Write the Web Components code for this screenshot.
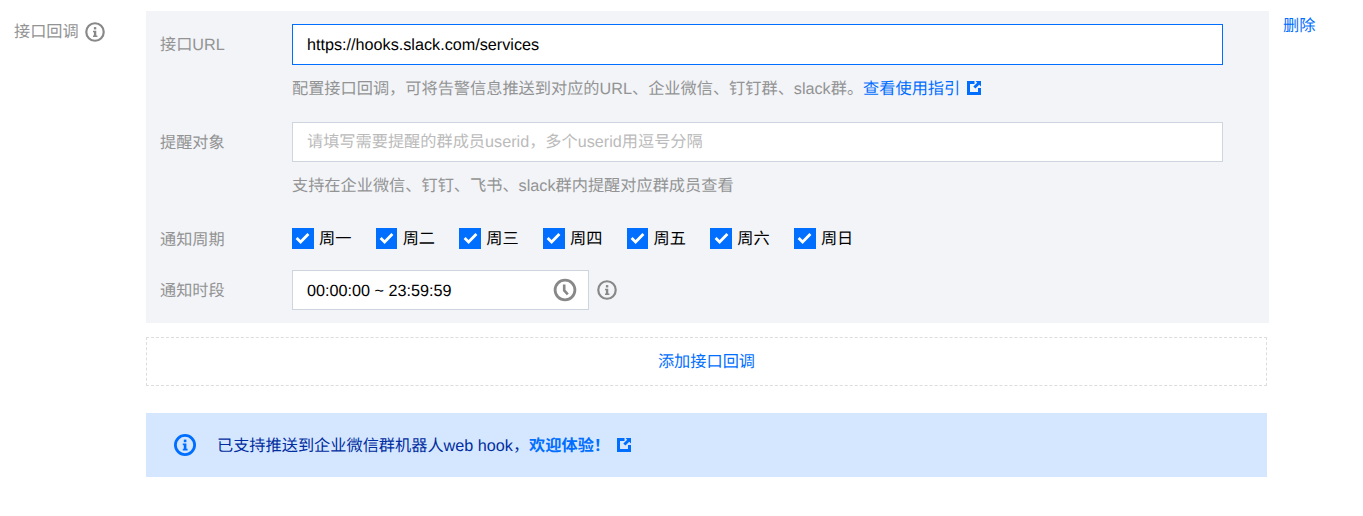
<!doctype html>
<html lang="zh">
<head>
<meta charset="utf-8">
<title>接口回调</title>
<style>
  html,body{margin:0;background:#fff}
  body{font:16.2px/22px "Liberation Sans","Noto Sans CJK SC",sans-serif;color:#000;text-rendering:geometricPrecision}
</style>
</head>
<body>
<hook-page></hook-page>
<script>
// small inline icons, shared by several elements
const INFO = (c, w) => `<svg viewBox="0 0 22 22" width="100%" height="100%" style="display:block">
  <circle cx="11" cy="11" r="9.6" fill="none" stroke="${c}" stroke-width="${w}"/>
  <rect x="9.8" y="5.6" width="2.6" height="2.6" fill="${c}"/>
  <path d="M8.8 9.6h3.6v5.2h1.2v1.7H8.8v-1.7h1v-3.5h-1z" fill="${c}"/></svg>`;

class InfoIcon extends HTMLElement {
  connectedCallback() {
    const color = this.getAttribute("color") || "#888";
    const size = this.getAttribute("size") || 20;
    this.attachShadow({ mode: "open" }).innerHTML = `
      <style>:host{display:inline-block;flex:none;width:${size}px;height:${size}px}</style>
      ${INFO(color, this.getAttribute("stroke") || 2.4)}`;
  }
}
customElements.define("info-icon", InfoIcon);

class ExtIcon extends HTMLElement {
  connectedCallback() {
    this.attachShadow({ mode: "open" }).innerHTML = `
      <style>:host{display:inline-block;width:14px;height:14px;vertical-align:-1px}
        svg{display:block;width:100%;height:100%}</style>
      <svg viewBox="0 0 14 14">
        <path d="M0 0h7.5v3H3v8h8V7h3v7H0z" fill="#006eff"/>
        <path d="M8.6 0H14v5.4l-1.8-1.7-3.8 3.9-2.1-2.1 3.9-3.8z" fill="#006eff"/>
      </svg>`;
  }
}
customElements.define("ext-icon", ExtIcon);

// label column + control column
class FormRow extends HTMLElement {
  connectedCallback() {
    this.attachShadow({ mode: "open" }).innerHTML = `
      <style>
        :host{display:grid;grid-template-columns:132px 1fr;align-items:start}
        .lab{color:#939393;line-height:var(--lab-h,42px);margin-bottom:var(--lab-mb,-2px)}
      </style>
      <div class="lab">${this.getAttribute("label")}</div>
      <div><slot></slot></div>`;
  }
}
customElements.define("form-row", FormRow);

class TextField extends HTMLElement {
  connectedCallback() {
    const focus = this.hasAttribute("focus");
    const ph = this.hasAttribute("placeholder");
    this.attachShadow({ mode: "open" }).innerHTML = `
      <style>
        :host{display:flex;align-items:center;box-sizing:border-box;background:#fff;padding:0 14px;
          width:var(--w,931px);height:var(--h,40px);
          border:1px solid ${focus ? "#006eff" : "#cfd5de"};color:${ph ? "#bbb" : "#000"}}
      </style>
      <slot></slot>`;
  }
}
customElements.define("text-field", TextField);

class HintText extends HTMLElement {
  connectedCallback() {
    this.attachShadow({ mode: "open" }).innerHTML = `
      <style>
        :host{display:block;margin-top:13px;margin-bottom:-1px;color:#939393;line-height:22px;white-space:nowrap}
      </style>
      <slot></slot>`;
  }
}
customElements.define("hint-text", HintText);

class WeekCheck extends HTMLElement {
  connectedCallback() {
    this.attachShadow({ mode: "open" }).innerHTML = `
      <style>
        :host{display:inline-flex;align-items:center;width:83.67px;height:22px}
        .box{width:21.7px;height:21px;background:#006eff;margin-right:5.3px;flex:none;display:grid;place-items:center}
        svg{width:15px;height:12px;display:block}
        .txt{padding-top:1px}
      </style>
      <span class="box"><svg viewBox="0 0 15 12"><path d="M1.6 6l4 4L13.4 2" fill="none" stroke="#fff" stroke-width="2.8"/></svg></span>
      <span class="txt"><slot></slot></span>`;
  }
}
customElements.define("week-check", WeekCheck);

class TimeField extends HTMLElement {
  connectedCallback() {
    this.attachShadow({ mode: "open" }).innerHTML = `
      <style>
        :host{display:flex;align-items:center;gap:8px}
        text-field{--w:297px}
        .t{flex:1;padding-top:2px}
        svg{width:24px;height:24px;display:block;flex:none;margin-right:-3px}
      </style>
      <text-field><span class="t"><slot></slot></span>
        <svg viewBox="0 0 24 24">
          <circle cx="12" cy="12" r="9.9" fill="none" stroke="#888" stroke-width="2.8"/>
          <path d="M11.2 6.4v6l3.6 4" fill="none" stroke="#888" stroke-width="2.6"/>
        </svg>
      </text-field>
      <info-icon></info-icon>`;
  }
}
customElements.define("time-field", TimeField);

class NoticeBar extends HTMLElement {
  connectedCallback() {
    this.attachShadow({ mode: "open" }).innerHTML = `
      <style>
        :host{display:flex;align-items:center;gap:21px;box-sizing:border-box;height:64px;margin:27px 0 0 146px;
          width:1121px;padding-left:28px;background:#d5e7ff;color:#002da0}
        span{padding-top:2px}
      </style>
      <info-icon color="#006eff" size="22" stroke="2.8"></info-icon>
      <span><slot></slot></span>`;
  }
}
customElements.define("notice-bar", NoticeBar);

class HookPage extends HTMLElement {
  connectedCallback() {
    const days = ["周一", "周二", "周三", "周四", "周五", "周六", "周日"];
    this.attachShadow({ mode: "open" }).innerHTML = `
      <style>
        :host{display:block;padding-top:11px}
        a{color:#006eff;text-decoration:none}
        .top{display:grid;grid-template-columns:146px 1123px auto;align-items:start}
        .title{display:flex;align-items:center;gap:6px;height:42px;padding-left:14px;color:#939393}
        .del{padding-left:14px;line-height:30px}
        .panel{background:#f2f4f8;padding:13px 0 13px 14px}
        .r2{margin-top:23px}
        .r3{margin-top:31px;--lab-h:26px;--lab-mb:-4px}
        .r4{margin-top:21px}
        .days{display:flex;height:22px;align-items:center}
        .add{display:block;box-sizing:border-box;width:1121px;height:49px;margin:14px 0 0 146px;
          border:1px dashed #ddd;text-align:center;line-height:49px}
        b{font-weight:700;color:#006eff}
        .gap{margin-left:7px}
      </style>
      <div class="top">
        <div class="title">接口回调<info-icon></info-icon></div>
        <div class="panel">
          <form-row label="接口URL" style="--lab-h:42px;--lab-mb:-1px">
            <text-field focus style="--h:41px">https://hooks.slack.com/services</text-field>
            <hint-text>配置接口回调，可将告警信息推送到对应的URL、企业微信、钉钉群、slack群。<a href="#">查看使用指引<ext-icon class="gap"></ext-icon></a></hint-text>
          </form-row>
          <form-row class="r2" label="提醒对象">
            <text-field placeholder>请填写需要提醒的群成员userid，多个userid用逗号分隔</text-field>
            <hint-text>支持在企业微信、钉钉、飞书、slack群内提醒对应群成员查看</hint-text>
          </form-row>
          <form-row class="r3" label="通知周期">
            <div class="days">${days.map((d) => `<week-check>${d}</week-check>`).join("")}</div>
          </form-row>
          <form-row class="r4" label="通知时段">
            <time-field>00:00:00 ~ 23:59:59</time-field>
          </form-row>
        </div>
        <div class="del"><a href="#">删除</a></div>
      </div>
      <a class="add" href="#">添加接口回调</a>
      <notice-bar>已支持推送到企业微信群机器人web hook，<b>欢迎体验！</b><ext-icon class="gap"></ext-icon></notice-bar>`;
  }
}
customElements.define("hook-page", HookPage);
</script>
</body>
</html>
